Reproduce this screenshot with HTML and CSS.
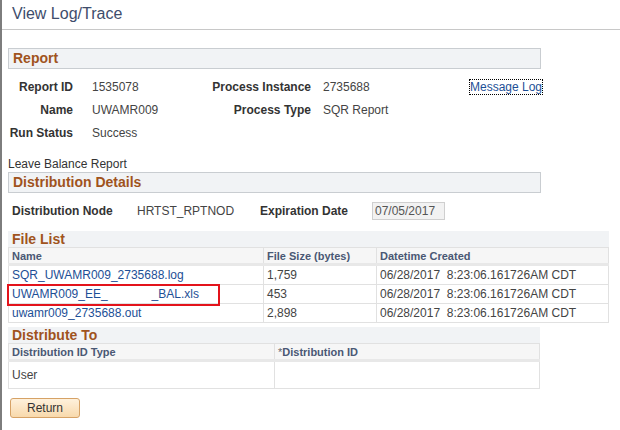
FILE: index.html
```html
<!DOCTYPE html>
<html lang="en">
<head>
    <meta charset="UTF-8">
    <title>View Log/Trace</title>
    <link rel="stylesheet" href="styles.css">
</head>
<body>
    <div class="page">
        <div class="page-header">
            <h1>View Log/Trace</h1>
        </div>

        <div class="content">
            <div class="section-bar bordered">Report</div>
            <div class="report-grid">
                <div class="lbl">Report ID</div>
                <div class="val">1535078</div>
                <div class="lbl">Process Instance</div>
                <div class="val val2">2735688</div>
                <div class="link-cell"><a href="#" class="focus-link">Message Log</a></div>

                <div class="lbl">Name</div>
                <div class="val">UWAMR009</div>
                <div class="lbl">Process Type</div>
                <div class="val val2">SQR Report</div>
                <div></div>

                <div class="lbl">Run Status</div>
                <div class="val">Success</div>
                <div></div>
                <div></div>
                <div></div>
            </div>

            <div class="desc">Leave Balance Report</div>

            <div class="section-bar bordered">Distribution Details</div>
            <div class="dist-row">
                <span class="lbl dist-node">Distribution Node</span>
                <span class="val dist-val">HRTST_RPTNOD</span>
                <span class="lbl exp-lbl">Expiration Date</span>
                <span class="date-box">07/05/2017</span>
            </div>

            <div class="grid-block file-list">
                <div class="section-bar">File List</div>
                <table class="grid">
                    <tr>
                        <th class="col-name">Name</th>
                        <th class="col-size">File Size (bytes)</th>
                        <th>Datetime Created</th>
                    </tr>
                    <tr>
                        <td><a href="#">SQR_UWAMR009_2735688.log</a></td>
                        <td>1,759</td>
                        <td class="dt">06/28/2017  8:23:06.161726AM CDT</td>
                    </tr>
                    <tr>
                        <td class="marked"><a href="#">UWAMR009_EE_<span class="redacted"></span>_BAL.xls</a></td>
                        <td>453</td>
                        <td class="dt">06/28/2017  8:23:06.161726AM CDT</td>
                    </tr>
                    <tr>
                        <td><a href="#">uwamr009_2735688.out</a></td>
                        <td>2,898</td>
                        <td class="dt">06/28/2017  8:23:06.161726AM CDT</td>
                    </tr>
                </table>
            </div>

            <div class="grid-block dist-to">
                <div class="section-bar">Distribute To</div>
                <table class="grid">
                    <tr>
                        <th class="col-type">Distribution ID Type</th>
                        <th><span class="req">*</span>Distribution ID</th>
                    </tr>
                    <tr class="tall">
                        <td class="plain">User</td>
                        <td></td>
                    </tr>
                </table>
            </div>

            <button class="btn">Return</button>
        </div>
    </div>
</body>
</html>
```

FILE: styles.css
```css
body {
    margin: 0;
    padding: 0;
    background: #fff;
    font-family: 'Liberation Sans', Arial, sans-serif;
    font-size: 12px;
    color: #333;
}

.page {
    border-left: 2px solid #7d7d7d;
    min-height: 430px;
    box-sizing: border-box;
}

.page-header {
    height: 29px;
    border-bottom: 1px solid #c8c8c8;
    display: flex;
    align-items: center;
}

.page-header h1 {
    margin: 0 0 2px 10px;
    font-size: 16px;
    font-weight: normal;
    color: #3e4d6c;
}

.content {
    padding: 18px 0 0 6px;
}

.section-bar {
    background: #f1f3f5;
    color: #a0531d;
    font-weight: bold;
    font-size: 14px;
    height: 16px;
    line-height: 16px;
    padding-left: 4px;
}

.section-bar.bordered {
    width: 527px;
    height: 19px;
    line-height: 19px;
    border: 1px solid #c9cdd1;
}

.lbl {
    font-weight: bold;
    color: #333;
}

.val {
    color: #444;
}

.report-grid {
    display: grid;
    grid-template-columns: 65px 139px 99px 159px auto;
    grid-auto-rows: 23px;
    align-items: center;
    margin-top: 6px;
}

.report-grid .lbl {
    text-align: right;
}

.report-grid .val {
    padding-left: 19px;
}

.report-grid .val2 {
    padding-left: 12px;
}

.focus-link {
    outline: 1px dotted #000;
    outline-offset: 0;
    color: #1d4f96;
    text-decoration: none;
}

a {
    color: #1d4f96;
    text-decoration: none;
}

.desc {
    margin-top: 12px;
    height: 16px;
    line-height: 16px;
    color: #333;
}

.dist-row {
    display: flex;
    align-items: center;
    height: 36px;
    padding-left: 4px;
}

.dist-node {
    width: 125px;
}

.dist-val {
    width: 123px;
}

.exp-lbl {
    width: 112px;
}

.date-box {
    box-sizing: border-box;
    width: 73px;
    height: 18px;
    line-height: 16px;
    border: 1px solid #cfcfcf;
    background: #f2f2f2;
    color: #555;
    padding-left: 2px;
}

.grid-block {
    width: 601px;
}

.file-list {
    margin-top: 2px;
}

.dist-to {
    width: 532px;
    margin-top: 4px;
}

.grid {
    width: 100%;
    border-collapse: collapse;
}

.grid th {
    background: #f6f6f6;
    border: 1px solid #e1e1e1;
    border-bottom: 3px solid #e8e8e8;
    text-align: left;
    font-size: 11px;
    font-weight: bold;
    color: #4a5874;
    height: 14px;
    padding: 1px 3px 0;
}

.grid td {
    border: 1px solid #e1e1e1;
    height: 18px;
    padding: 0 3px;
    color: #444;
    white-space: pre;
}

.col-name {
    width: 248px;
}

.col-size {
    width: 106px;
}

.col-type {
    width: 259px;
}

.req {
    font-weight: normal;
    color: #666;
}

.grid tr.tall td {
    height: 26px;
}

.marked {
    position: relative;
}

.marked::after {
    content: "";
    position: absolute;
    left: -2px;
    top: -1px;
    width: 209px;
    height: 18px;
    border: 2px solid #e3131b;
}

.redacted {
    display: inline-block;
    width: 44px;
}

.btn {
    margin: 9px 0 0 2px;
    width: 70px;
    height: 20px;
    border: 1px solid #d6a266;
    border-radius: 3px;
    background: linear-gradient(#fef1dc, #f8d9ac);
    font-family: 'Liberation Sans', Arial, sans-serif;
    font-size: 12px;
    color: #333;
    padding: 0;
}
```
